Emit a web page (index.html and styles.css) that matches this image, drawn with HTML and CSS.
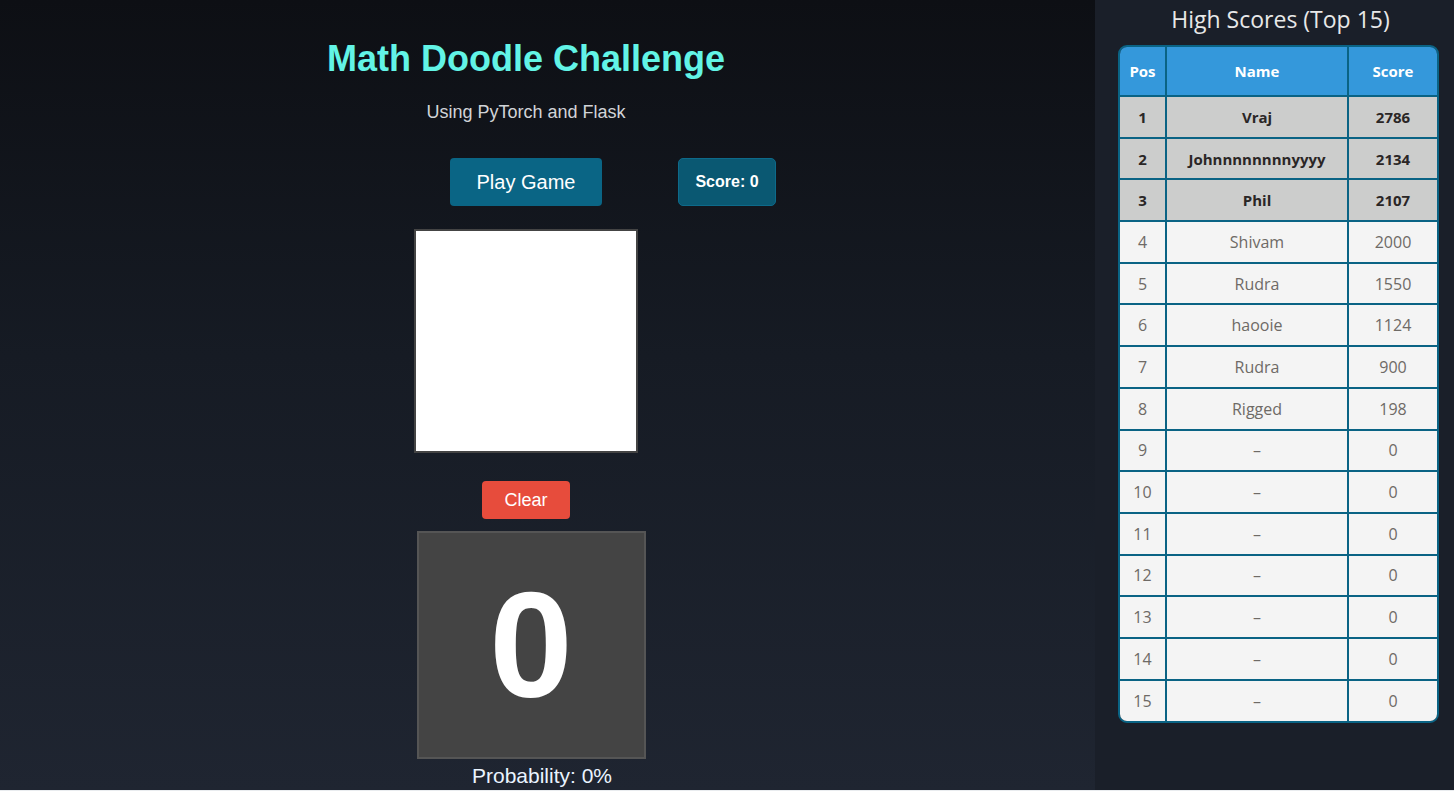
FILE: index.html
```html
<!DOCTYPE html>
<html lang="en">
<head>
<meta charset="utf-8">
<title>Math Doodle Challenge</title>
<link rel="stylesheet" href="styles.css">
</head>
<body>
<div class="layout">
  <main class="main">
    <div class="column">
      <h1 class="title">Math Doodle Challenge</h1>
      <p class="subtitle">Using PyTorch and Flask</p>
      <div class="controls">
        <div class="controls-left"></div>
        <button class="btn-play">Play Game</button>
        <div class="controls-right"><div class="score-box">Score: 0</div></div>
      </div>
      <div class="canvas"></div>
      <button class="btn-clear">Clear</button>
      <div class="result">
        <div class="result-box">0</div>
        <div class="probability">Probability: 0%</div>
      </div>
    </div>
  </main>
  <aside class="sidebar">
    <h2 class="side-title">High Scores (Top 15)</h2>
    <div class="table-wrap">
      <table class="scores">
        <thead>
          <tr><th class="c-pos">Pos</th><th class="c-name">Name</th><th class="c-score">Score</th></tr>
        </thead>
        <tbody>
          <tr class="top"><td>1</td><td>Vraj</td><td>2786</td></tr>
          <tr class="top"><td>2</td><td>Johnnnnnnnnyyyy</td><td>2134</td></tr>
          <tr class="top"><td>3</td><td>Phil</td><td>2107</td></tr>
          <tr><td>4</td><td>Shivam</td><td>2000</td></tr>
          <tr><td>5</td><td>Rudra</td><td>1550</td></tr>
          <tr><td>6</td><td>haooie</td><td>1124</td></tr>
          <tr><td>7</td><td>Rudra</td><td>900</td></tr>
          <tr><td>8</td><td>Rigged</td><td>198</td></tr>
          <tr><td>9</td><td>–</td><td>0</td></tr>
          <tr><td>10</td><td>–</td><td>0</td></tr>
          <tr><td>11</td><td>–</td><td>0</td></tr>
          <tr><td>12</td><td>–</td><td>0</td></tr>
          <tr><td>13</td><td>–</td><td>0</td></tr>
          <tr><td>14</td><td>–</td><td>0</td></tr>
          <tr><td>15</td><td>–</td><td>0</td></tr>
        </tbody>
      </table>
    </div>
  </aside>
</div>
</body>
</html>
```
FILE: styles.css
```css
* { box-sizing: border-box; }
html, body { margin: 0; padding: 0; }
body {
  background: #e9ecef;
  font-family: "Liberation Sans", Arial, sans-serif;
  overflow: hidden;
}
.layout {
  display: grid;
  grid-template-columns: 1095px 1fr;
  height: 790px;
}
.main {
  background: linear-gradient(180deg, #0d0f14 0%, #161b24 45%, #1f2531 100%);
  padding-right: 43px;
}
.column {
  display: flex;
  flex-direction: column;
  align-items: center;
}
.title {
  margin: 38px 0 0;
  font-size: 36px;
  line-height: 42px;
  font-weight: bold;
  color: #62f4e6;
}
.subtitle {
  margin: 22px 0 0;
  font-size: 18px;
  line-height: 20px;
  color: #d2d4d8;
}
.controls {
  margin-top: 36px;
  width: 100%;
  display: grid;
  grid-template-columns: 1fr auto 1fr;
  align-items: start;
}
.btn-play {
  width: 152px;
  height: 48px;
  border: none;
  border-radius: 4px;
  background: #0a6585;
  color: #ffffff;
  font-family: "Liberation Sans", Arial, sans-serif;
  font-size: 20px;
}
.controls-right { display: flex; padding-left: 76px; }
.score-box {
  width: 98px;
  height: 48px;
  border: 1px solid #0d6a8a;
  border-radius: 5px;
  background: #0a5872;
  color: #ffffff;
  font-size: 16px;
  font-weight: bold;
  display: flex;
  align-items: center;
  justify-content: center;
}
.canvas {
  margin-top: 23px;
  width: 224px;
  height: 224px;
  border: 2px solid #444444;
  background: #ffffff;
}
.btn-clear {
  margin-top: 28px;
  width: 88px;
  height: 38px;
  border: none;
  border-radius: 4px;
  background: #e74c3c;
  color: #ffffff;
  font-family: "Liberation Sans", Arial, sans-serif;
  font-size: 18px;
}
.result {
  margin-top: 12px;
  display: flex;
  flex-direction: column;
  align-items: center;
  padding-left: 10px;
}
.result-box {
  width: 229px;
  height: 228px;
  border: 2px solid #555555;
  background: #444444;
  color: #ffffff;
  font-size: 150px;
  font-weight: bold;
  display: flex;
  align-items: center;
  justify-content: center;
  line-height: 1;
}
.probability {
  margin-top: 5px;
  padding-left: 22px;
  font-size: 21px;
  line-height: 24px;
  color: #eaf4ff;
}
.sidebar {
  background: #1a1f29;
  padding: 0 15px 0 23px;
  font-family: "Open Sans", "DejaVu Sans", sans-serif;
}
.side-title {
  margin: 4px 0 0;
  text-align: center;
  font-size: 23px;
  line-height: 30px;
  font-weight: normal;
  color: #e8e8e8;
  padding-left: 4px;
}
.table-wrap {
  margin-top: 11px;
  width: 321px;
  border: 2px solid #0a6384;
  border-radius: 9px;
  overflow: hidden;
}
.scores {
  width: 100%;
  border-collapse: collapse;
  border-style: hidden;
  table-layout: fixed;
}
.scores th, .scores td {
  border: 2px solid #0a6384;
  text-align: center;
  padding: 0;
  font-size: 16px;
}
.scores th {
  background: #3498db;
  color: #ffffff;
  font-weight: bold;
  font-size: 15px;
  height: 49px;
}
.c-pos { width: 46px; }
.c-name { width: 182px; }
.scores td {
  height: 41.7px;
  background: #f4f4f4;
  color: #6e6a66;
}
.scores tr.top td {
  background: #cccdcc;
  color: #2a2626;
  font-weight: bold;
  font-size: 15px;
}
```
